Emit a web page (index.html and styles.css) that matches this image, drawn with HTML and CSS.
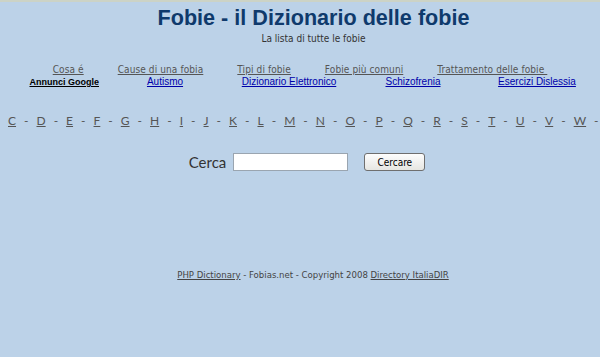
FILE: index.html
```html
<!DOCTYPE html>
<html lang="it">
<head>
<meta charset="utf-8">
<title>Fobie - il Dizionario delle fobie</title>
<link rel="stylesheet" href="styles.css">
</head>
<body>
<div class="topbar"></div>
<div class="page">
  <header class="head">
    <h1 class="title">Fobie - il Dizionario delle fobie</h1>
    <p class="sub">La lista di tutte le fobie</p>
  </header>
  <nav class="menu">
    <a href="#">Cosa é</a>
    <a href="#">Cause di una fobia</a>
    <a href="#">Tipi di fobie</a>
    <a href="#">Fobie più comuni</a>
    <a href="#">Trattamento delle fobie </a>
  </nav>
  <div class="ads">
    <div class="ads-label"><a href="#">Annunci Google</a></div>
    <div class="ads-cell"><a href="#">Autismo</a></div>
    <div class="ads-cell"><a href="#">Dizionario Elettronico</a></div>
    <div class="ads-cell"><a href="#">Schizofrenia</a></div>
    <div class="ads-cell"><a href="#">Esercizi Dislessia</a></div>
  </div>
  <div class="letters">
    <a href="#">C</a><span>-</span><a href="#">D</a><span>-</span><a href="#">E</a><span>-</span><a href="#">F</a><span>-</span><a href="#">G</a><span>-</span><a href="#">H</a><span>-</span><a href="#">I</a><span>-</span><a href="#">J</a><span>-</span><a href="#">K</a><span>-</span><a href="#">L</a><span>-</span><a href="#">M</a><span>-</span><a href="#">N</a><span>-</span><a href="#">O</a><span>-</span><a href="#">P</a><span>-</span><a href="#">Q</a><span>-</span><a href="#">R</a><span>-</span><a href="#">S</a><span>-</span><a href="#">T</a><span>-</span><a href="#">U</a><span>-</span><a href="#">V</a><span>-</span><a href="#">W</a><span>-</span>
  </div>
  <form class="search">
    <label class="search-label" for="q">Cerca</label>
    <input class="search-input" id="q" type="text">
    <button class="search-btn" type="button">Cercare</button>
  </form>
  <footer class="foot">
    <a href="#">PHP Dictionary</a> - Fobias.net - Copyright 2008 <a href="#">Directory ItaliaDIR</a>
  </footer>
</div>
</body>
</html>
```

FILE: styles.css
```css
html, body {
  margin: 0;
  padding: 0;
  background: #bcd2e8;
  overflow: hidden;
}
body {
  width: 600px;
  height: 357px;
}
.topbar {
  height: 2px;
  background: #ccd3c6;
}
.page {
  padding: 0 0 0 8px;
}
.head {
  text-align: center;
  padding-left: 19px;
}
.title {
  margin: 0;
  padding-top: 4px;
  font-family: "Liberation Sans", Arial, sans-serif;
  font-weight: bold;
  font-size: 21.6px;
  line-height: 24px;
  color: #0f3a6c;
}
.sub {
  margin: 3px 0 0;
  font-family: "DejaVu Sans Condensed", "DejaVu Sans", sans-serif;
  font-size: 10px;
  line-height: 12px;
  color: #333;
}
.menu {
  display: flex;
  justify-content: center;
  gap: 34px;
  margin-top: 19px;
  padding-right: 8px;
  font-family: "DejaVu Sans Condensed", "DejaVu Sans", sans-serif;
  font-size: 10px;
  line-height: 12px;
  letter-spacing: 0.1px;
}
.menu a {
  color: #555;
  white-space: pre;
}
.ads {
  display: flex;
  font-family: "Liberation Sans", Arial, sans-serif;
  font-size: 10px;
  line-height: 12px;
}
.ads-label {
  width: 91px;
  text-align: right;
  padding-right: 4px;
  font-size: 9px;
}
.ads-label a {
  color: #000;
  font-weight: bold;
}
.ads-cell {
  width: 124px;
  text-align: center;
}
.ads-cell a {
  color: #0000aa;
}
.letters {
  display: flex;
  gap: 8px;
  white-space: nowrap;
  margin-top: 25px;
  font-family: Lato, "Open Sans", sans-serif;
  font-size: 12px;
  line-height: 16px;
  color: #555;
}
.letters a {
  color: #555;
}
.search {
  display: flex;
  align-items: center;
  justify-content: center;
  margin: 24px 0 0;
  padding-left: 6px;
}
.search-label {
  font-family: Lato, "Open Sans", sans-serif;
  font-size: 15px;
  color: #333;
  margin-right: 7px;
}
.search-input {
  box-sizing: border-box;
  width: 115px;
  height: 18px;
  margin: 0 16px 0 0;
  border: 1px solid #9aa5b0;
  background: #fff;
  padding: 0;
}
.search-btn {
  box-sizing: border-box;
  width: 61px;
  height: 18px;
  padding: 0;
  border: 1px solid #6f6f6f;
  border-radius: 3px;
  background: linear-gradient(#fdfdfd, #e6e6e2);
  font-family: "DejaVu Sans Condensed", "DejaVu Sans", sans-serif;
  font-size: 10px;
  color: #000;
}
.foot {
  margin-top: 98px;
  text-align: center;
  padding-left: 18px;
  font-family: "DejaVu Sans Condensed", "DejaVu Sans", sans-serif;
  font-size: 9.5px;
  line-height: 12px;
  color: #444;
}
.foot a {
  color: #444;
}
```
